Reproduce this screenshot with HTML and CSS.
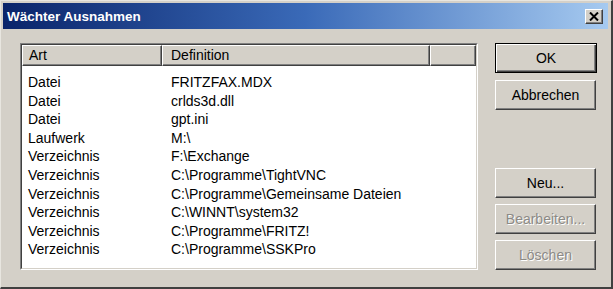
FILE: index.html
```html
<!DOCTYPE html>
<html lang="de">
<head>
  <meta charset="UTF-8">
  <title>Wächter Ausnahmen</title>
  <link rel="stylesheet" href="styles.css">
</head>
<body>
  <div class="window">
    <div class="titlebar">
      <span class="title">Wächter Ausnahmen</span>
      <span class="close-btn">
        <svg width="10" height="9" viewBox="0 0 10 9">
          <path d="M1 0.5 L9 8.5 M9 0.5 L1 8.5" stroke="#000" stroke-width="2" fill="none"/>
        </svg>
      </span>
    </div>

    <div class="content">
      <div class="listbox">
        <div class="listbox-inner">
          <div class="list-head">
            <div class="hcell col-art">Art</div>
            <div class="hcell col-def">Definition</div>
            <div class="hcell col-rest"></div>
          </div>
          <div class="list-body">
            <div class="row"><span class="col-art">Datei</span><span class="col-def">FRITZFAX.MDX</span></div>
            <div class="row"><span class="col-art">Datei</span><span class="col-def">crlds3d.dll</span></div>
            <div class="row"><span class="col-art">Datei</span><span class="col-def">gpt.ini</span></div>
            <div class="row"><span class="col-art">Laufwerk</span><span class="col-def">M:\</span></div>
            <div class="row"><span class="col-art">Verzeichnis</span><span class="col-def">F:\Exchange</span></div>
            <div class="row"><span class="col-art">Verzeichnis</span><span class="col-def">C:\Programme\TightVNC</span></div>
            <div class="row"><span class="col-art">Verzeichnis</span><span class="col-def">C:\Programme\Gemeinsame Dateien</span></div>
            <div class="row"><span class="col-art">Verzeichnis</span><span class="col-def">C:\WINNT\system32</span></div>
            <div class="row"><span class="col-art">Verzeichnis</span><span class="col-def">C:\Programme\FRITZ!</span></div>
            <div class="row"><span class="col-art">Verzeichnis</span><span class="col-def">C:\Programme\SSKPro</span></div>
          </div>
        </div>
      </div>

      <div class="buttons">
        <div class="btn-group top">
          <button class="btn default">OK</button>
          <button class="btn">Abbrechen</button>
        </div>
        <div class="btn-group bottom">
          <button class="btn">Neu...</button>
          <button class="btn" disabled>Bearbeiten...</button>
          <button class="btn" disabled>Löschen</button>
        </div>
      </div>
    </div>
  </div>
</body>
</html>
```

FILE: styles.css
```css
body {
  margin: 0;
  font-family: "Liberation Sans", Arial, sans-serif;
  font-size: 14px;
  color: #000;
  background-color: #d4d0c8;
}

.window {
  width: 613px;
  height: 289px;
  box-sizing: border-box;
  background-color: #d4d0c8;
  border-top: 1px solid #e8e6e0;
  border-left: 1px solid #e8e6e0;
  border-right: 2px solid #404040;
  border-bottom: 2px solid #404040;
  padding: 2px 3px 0 2px;
}

.titlebar {
  height: 26px;
  display: flex;
  align-items: center;
  justify-content: space-between;
  padding: 0 5px 0 4px;
  background: linear-gradient(to right, #0a246a 0%, #3a6ab8 50%, #a6caf0 100%);
}

.title {
  color: #fff;
  font-weight: bold;
  font-size: 13.5px;
  letter-spacing: 0;
}

.close-btn {
  width: 18px;
  height: 15px;
  box-sizing: border-box;
  display: flex;
  align-items: center;
  justify-content: center;
  background-color: #d4d0c8;
  border: 1px solid;
  border-color: #fff #404040 #404040 #fff;
  box-shadow: inset -1px -1px #808080;
}

.content {
  display: flex;
  padding: 14px 0 0 17px;
}

.listbox {
  width: 458px;
  height: 227px;
  box-sizing: border-box;
  border: 1px solid;
  border-color: #808080 #fff #fff #808080;
}

.listbox-inner {
  height: 100%;
  box-sizing: border-box;
  border: 1px solid;
  border-color: #404040 #d4d0c8 #d4d0c8 #404040;
  background-color: #fff;
  overflow: hidden;
}

.list-head {
  display: flex;
  height: 21px;
}

.hcell {
  box-sizing: border-box;
  height: 21px;
  line-height: 19px;
  background-color: #d4d0c8;
  border: 1px solid;
  border-color: #fff #404040 #404040 #fff;
  box-shadow: inset -1px -1px #808080;
  padding-left: 6px;
}

.col-art {
  width: 140px;
  flex: none;
}

.col-def {
  width: 268px;
  flex: none;
  padding-left: 9px;
}

.hcell.col-def {
  padding-left: 8px;
}

.col-rest {
  flex: 1;
}

.list-body {
  padding-top: 7px;
}

.row {
  display: flex;
  height: 18.6px;
  line-height: 18.6px;
}

.row .col-art {
  padding-left: 6px;
  box-sizing: border-box;
}

.row .col-def {
  box-sizing: border-box;
}

.buttons {
  display: flex;
  flex-direction: column;
  justify-content: space-between;
  height: 227px;
  margin-left: 17px;
}

.btn-group {
  display: flex;
  flex-direction: column;
}

.btn-group.top {
  gap: 7px;
}

.btn-group.bottom {
  gap: 6px;
}

.btn {
  width: 101px;
  height: 30px;
  box-sizing: border-box;
  font-family: "Liberation Sans", Arial, sans-serif;
  font-size: 14px;
  color: #000;
  background-color: #d4d0c8;
  border: 1px solid;
  border-color: #fff #404040 #404040 #fff;
  box-shadow: inset -1px -1px #808080;
  padding: 0;
}

.btn.default {
  width: 102px;
  border: 1px solid #000;
  box-shadow: inset 1px 1px #fff, inset -1px -1px #404040, inset -2px -2px #808080;
}

.btn:disabled {
  color: #8c8a86;
  text-shadow: 1px 1px #fff;
}
```
